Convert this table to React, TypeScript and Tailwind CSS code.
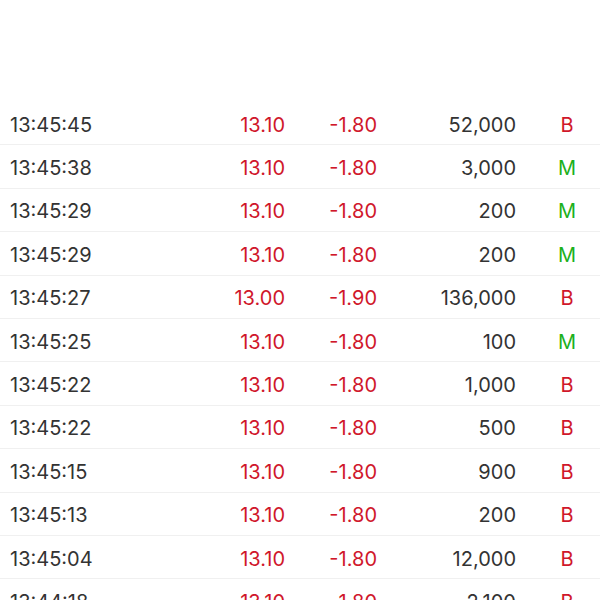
const rows = [
  ['13:45:45', '13.10', '-1.80', '52,000', 'B'],
  ['13:45:38', '13.10', '-1.80', '3,000', 'M'],
  ['13:45:29', '13.10', '-1.80', '200', 'M'],
  ['13:45:29', '13.10', '-1.80', '200', 'M'],
  ['13:45:27', '13.00', '-1.90', '136,000', 'B'],
  ['13:45:25', '13.10', '-1.80', '100', 'M'],
  ['13:45:22', '13.10', '-1.80', '1,000', 'B'],
  ['13:45:22', '13.10', '-1.80', '500', 'B'],
  ['13:45:15', '13.10', '-1.80', '900', 'B'],
  ['13:45:13', '13.10', '-1.80', '200', 'B'],
  ['13:45:04', '13.10', '-1.80', '12,000', 'B'],
  ['13:44:18', '13.10', '-1.80', '2,100', 'B'],
];

export default function App() {
  return (
    <div className="w-[600px] h-[600px] overflow-hidden bg-white font-['Inter',sans-serif] text-[20px]">
      <div className="h-[102px]" />
      {rows.map(([time, price, change, vol, side], i) => (
        <div key={i} className="h-[43.4px] pt-[3px] flex items-center border-b border-[#f0f0f0]">
          <span className="shrink-0 pl-[10px] text-[#333333] w-[200px]">{time}</span>
          <span className="shrink-0 w-[85px] text-right text-[#d0172b]">{price}</span>
          <span className="shrink-0 w-[92px] text-right text-[#d0172b]">{change}</span>
          <span className="shrink-0 w-[139px] text-right text-[#333333]">{vol}</span>
          <span className={`shrink-0 w-[84px] text-center pl-[18px] ${side === 'B' ? 'text-[#d0172b]' : 'text-[#1cb01c]'}`}>{side}</span>
        </div>
      ))}
    </div>
  );
}
